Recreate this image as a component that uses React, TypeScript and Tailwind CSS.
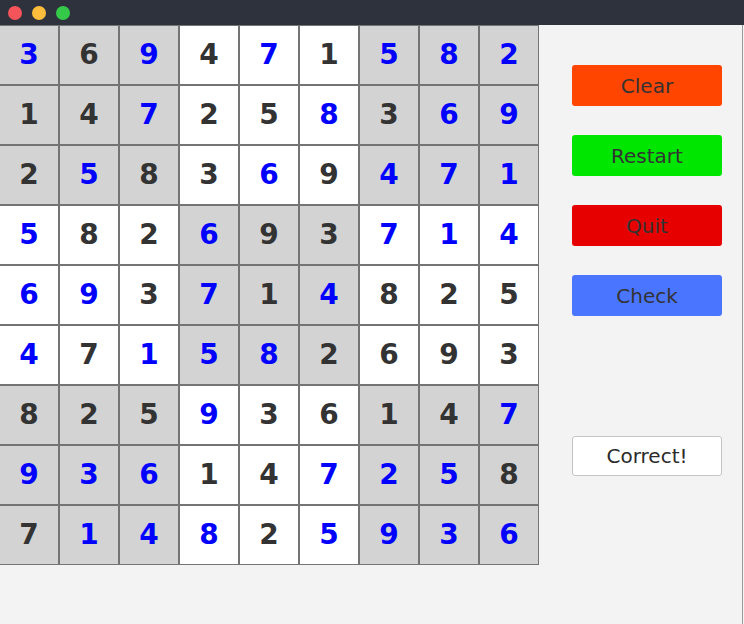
import React from "react";

// solved board, with which digits are "given" (blue)
const board = [
  "369471582",
  "147258369",
  "258369471",
  "582693714",
  "693714825",
  "471582693",
  "825936147",
  "936147258",
  "714825936",
];

const given = [
  "101010111",
  "001001011",
  "010010111",
  "100100111",
  "110101000",
  "101110000",
  "000100001",
  "111001110",
  "011101111",
];

const buttons = [
  { label: "Clear", cls: "bg-[#ff4500]" },
  { label: "Restart", cls: "bg-[#00e600]" },
  { label: "Quit", cls: "bg-[#e60000]" },
  { label: "Check", cls: "bg-[#4a75ff]" },
];

function Cell({ r, c }: { r: number; c: number }) {
  const shaded = (Math.floor(r / 3) + Math.floor(c / 3)) % 2 === 0;
  const blue = given[r][c] === "1";
  return (
    <div
      className={`w-[60px] h-[60px] border border-[#747474] flex items-center justify-center text-[28px] font-bold ${
        shaded ? "bg-[#d3d3d3]" : "bg-white"
      } ${blue ? "text-[#0000ff]" : "text-[#333333]"}`}
    >
      {board[r][c]}
    </div>
  );
}

export default function App() {
  return (
    <div
      className="w-[744px] h-[624px] bg-[#f3f3f3] flex flex-col overflow-hidden relative"
      style={{ fontFamily: '"DejaVu Sans", sans-serif' }}
    >
      {/* Title bar */}
      <div className="h-[25px] bg-[#2e323d] flex items-center gap-[10px] pl-[8px] shrink-0">
        <span className="w-[14px] h-[14px] rounded-full bg-[#f4545a]" />
        <span className="w-[14px] h-[14px] rounded-full bg-[#fdbd3c]" />
        <span className="w-[14px] h-[14px] rounded-full bg-[#35c94a]" />
      </div>

      <div className="flex">
        {/* Board */}
        <div className="grid grid-cols-9 w-[540px] -ml-px shrink-0">
          {board.map((row, r) =>
            row.split("").map((_, c) => <Cell key={`${r}-${c}`} r={r} c={c} />)
          )}
        </div>

        {/* Controls */}
        <div className="flex flex-col pl-[33px] pt-[40px]">
          {buttons.map((b, i) => (
            <button
              key={b.label}
              className={`w-[150px] h-[41px] rounded-[3px] ${b.cls} text-[#333333] text-[20px] ${
                i > 0 ? "mt-[29px]" : ""
              }`}
            >
              {b.label}
            </button>
          ))}
          <div className="mt-[120px] w-[150px] h-[40px] rounded-[3px] bg-white border border-[#c4c4c4] flex items-center justify-center text-[20px] text-[#2a2a2a]">
            Correct!
          </div>
        </div>
      </div>

      {/* window edge */}
      <div className="absolute right-[1px] top-[25px] bottom-0 w-px bg-[#9a9a9a]" />
    </div>
  );
}
